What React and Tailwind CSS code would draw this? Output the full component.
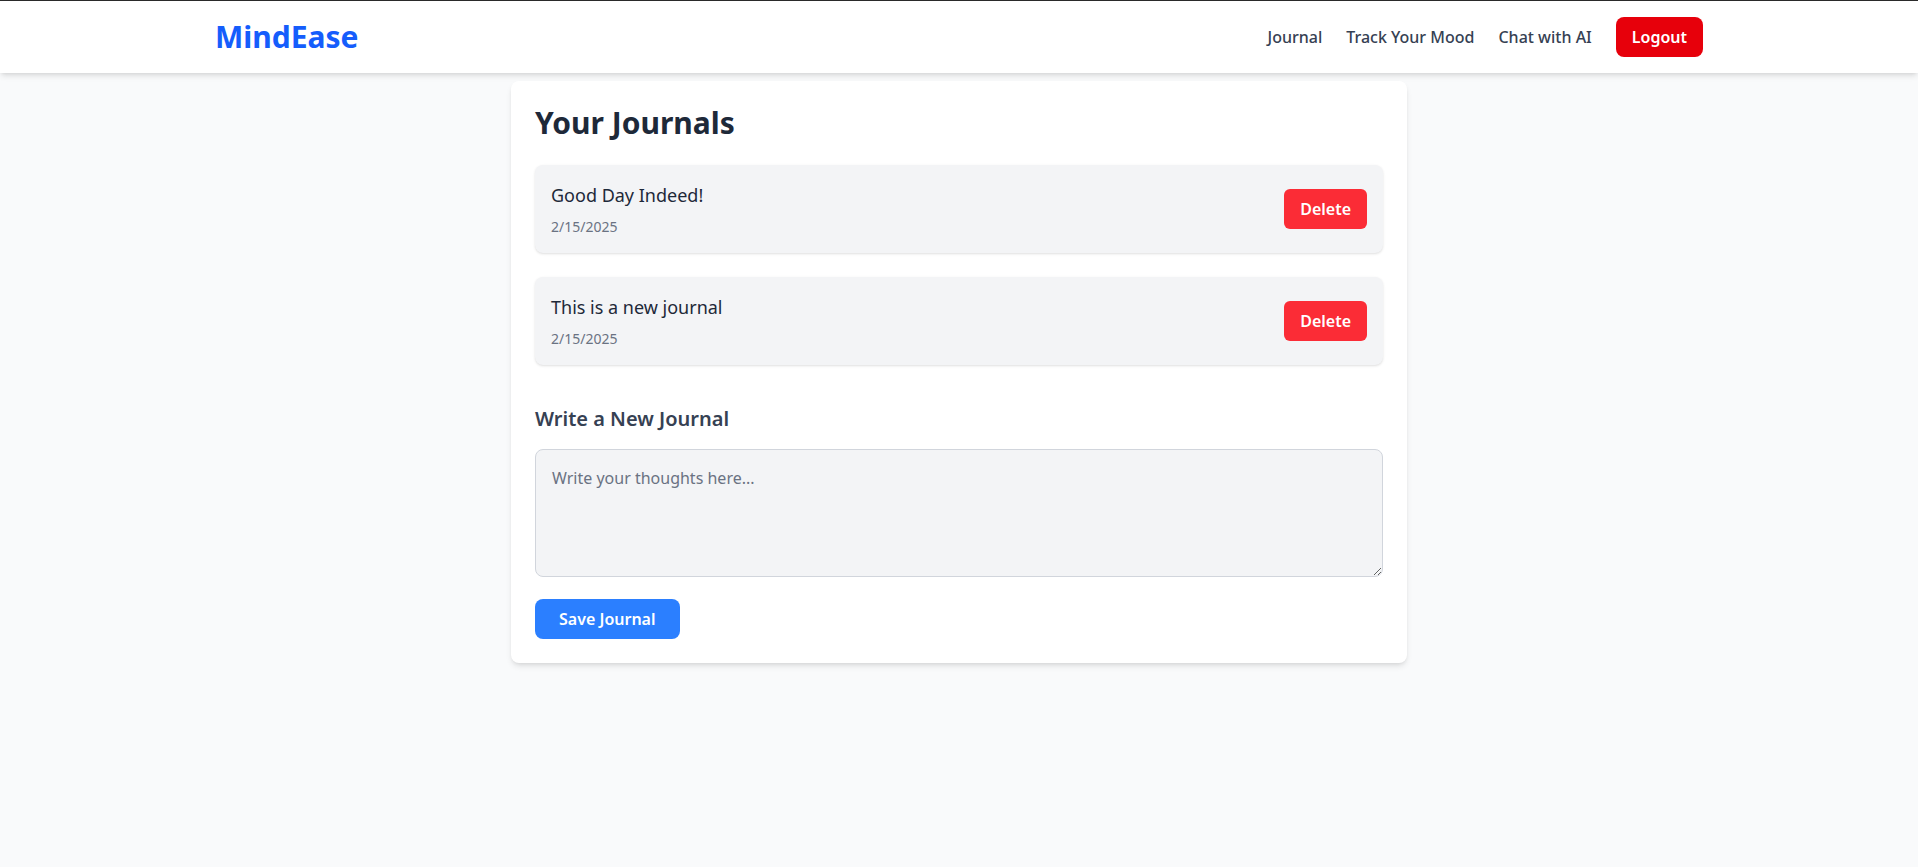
import { useState } from "react";

const FONT = { fontFamily: '"Segoe UI", "Noto Sans", sans-serif' };

const JOURNALS = [
  { id: 1, text: "Good Day Indeed!", date: "2/15/2025" },
  { id: 2, text: "This is a new journal", date: "2/15/2025" },
];

function Navbar() {
  return (
    <nav className="bg-white shadow-md py-4">
      <div className="container mx-auto px-6 flex items-center justify-between">
        <span className="text-3xl font-bold text-blue-600">MindEase</span>
        <div className="flex items-center gap-6">
          <a className="text-gray-700 font-medium cursor-pointer">Journal</a>
          <a className="text-gray-700 font-medium cursor-pointer">Track Your Mood</a>
          <a className="text-gray-700 font-medium cursor-pointer">Chat with AI</a>
          <button className="bg-red-600 text-white font-semibold px-4 py-2 rounded-lg">Logout</button>
        </div>
      </div>
    </nav>
  );
}

export default function App() {
  const [journals, setJournals] = useState(JOURNALS);
  const [draft, setDraft] = useState("");

  const remove = (id) => setJournals(prev => prev.filter(j => j.id !== id));
  const save = () => {
    if (!draft.trim()) return;
    setJournals(prev => [...prev, { id: Date.now(), text: draft, date: new Date().toLocaleDateString() }]);
    setDraft("");
  };

  return (
    <div className="min-h-screen bg-gray-50" style={FONT}>
      <div className="h-px bg-[#2b2b2b]" />
      <Navbar />

      <div className="max-w-4xl mx-auto mt-2 bg-white rounded-lg shadow-md p-6">
        <h1 className="text-3xl font-bold text-gray-800 mb-6">Your Journals</h1>

        <div className="space-y-6">
          {journals.map(j => (
            <div key={j.id} className="bg-gray-100 rounded-lg shadow-sm p-4 flex items-center justify-between">
              <div>
                <p className="text-lg text-gray-800">{j.text}</p>
                <p className="text-sm text-gray-500 mt-2">{j.date}</p>
              </div>
              <button onClick={() => remove(j.id)} className="bg-red-500 text-white font-semibold px-4 py-2 rounded-md">Delete</button>
            </div>
          ))}
        </div>

        <h2 className="text-xl font-semibold text-gray-700 mt-10 mb-4">Write a New Journal</h2>
        <textarea
          value={draft}
          onChange={e => setDraft(e.target.value)}
          placeholder="Write your thoughts here..."
          className="block w-full h-32 p-4 bg-gray-100 border border-gray-300 rounded-lg text-gray-800 placeholder:text-gray-500 focus:outline-none"
        />
        <button onClick={save} className="mt-[22px] bg-blue-500 text-white font-semibold px-6 py-2 rounded-lg">Save Journal</button>
      </div>
    </div>
  );
}
